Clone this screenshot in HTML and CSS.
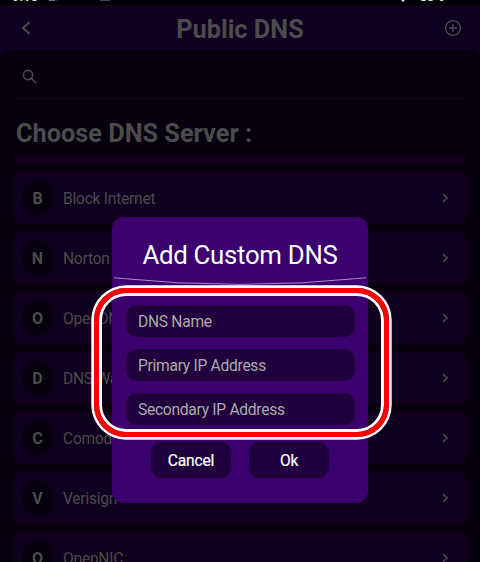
FILE: index.html
```
<!DOCTYPE html>
<html lang="en">
<head>
<meta charset="utf-8">
<title>Public DNS</title>
<link rel="stylesheet" href="styles.css">
</head>
<body>
<div class="screen">
  <div class="status"><span class="time">9:16</span>
    <svg class="st1" viewBox="0 0 12 3"><path d="M1 0V1.5H7M9 0V1.5" /></svg>
    <svg class="st2" viewBox="0 0 12 3"><path d="M1 .5H11" /></svg>
    <svg class="wifi" viewBox="0 0 6 3"><path d="M1 0L3 2L5 0Z" /></svg>
    <span class="battery">83%</span></div>
  <header class="topbar">
    <svg class="back" viewBox="0 0 10 14"><path d="M8.5 1.2L2 7L8.5 12.8"/></svg>
    <h1>Public DNS</h1>
    <svg class="plus" viewBox="0 0 18 18"><circle cx="9" cy="9" r="7.4"/><path d="M9 5V13M5 9H13"/></svg>
  </header>
  <main class="sheet">
    <div class="search"><svg viewBox="0 0 16 16"><circle cx="6" cy="6" r="4.6"/><path d="M9.4 9.4L14 14"/></svg></div>
    <h2>Choose DNS Server :</h2>
    <div class="list">
      <div class="row cut"></div>
      <div class="row"><b>B</b><span>Block Internet</span><svg viewBox="0 0 7 10"><path d="M1 1L5.2 5L1 9"/></svg></div>
      <div class="row"><b>N</b><span>Norton</span><svg viewBox="0 0 7 10"><path d="M1 1L5.2 5L1 9"/></svg></div>
      <div class="row"><b>O</b><span>OpenDNS</span><svg viewBox="0 0 7 10"><path d="M1 1L5.2 5L1 9"/></svg></div>
      <div class="row"><b>D</b><span>DNS Watch</span><svg viewBox="0 0 7 10"><path d="M1 1L5.2 5L1 9"/></svg></div>
      <div class="row"><b>C</b><span>Comodo</span><svg viewBox="0 0 7 10"><path d="M1 1L5.2 5L1 9"/></svg></div>
      <div class="row"><b>V</b><span>Verisign</span><svg viewBox="0 0 7 10"><path d="M1 1L5.2 5L1 9"/></svg></div>
      <div class="row"><b>O</b><span>OpenNIC</span><svg viewBox="0 0 7 10"><path d="M1 1L5.2 5L1 9"/></svg></div>
    </div>
  </main>
  <section class="dialog">
    <h3>Add Custom DNS</h3>
    <svg class="curve" viewBox="0 0 252 10"><path d="M0 .8Q126 14 252 .8"/></svg>
    <div class="fields">
      <div class="field">DNS Name</div>
      <div class="field">Primary IP Address</div>
      <div class="field">Secondary IP Address</div>
    </div>
    <div class="actions"><button>Cancel</button><button>Ok</button></div>
  </section>
  <div class="marker"></div>
</div>
</body>
</html>
```

FILE: styles.css
```
* { box-sizing: border-box; margin: 0; padding: 0; }
body { background: #000; font-family: Roboto, sans-serif; }
svg { display: block; fill: none; flex: none; }
.screen { position: relative; width: 480px; height: 562px; overflow: hidden; background: #10001f; }
.status { display: flex; height: 5px; padding: 0 36px 0 12px; background: #000; color: #eee; font-size: 13px; font-weight: 700; line-height: 14px; }
.status span { margin-top: -10px; }
.time { width: 36px; }
.status svg { height: 3px; margin-top: -1px; stroke: #777; stroke-width: 1; }
.st1 { width: 12px; }
.status .st2 { width: 12px; margin: 0 0 0 39px; stroke: #444; }
.status .wifi { width: 6px; margin: 0 14px 0 auto; fill: #ddd; stroke: none; }
.battery { font-weight: 500; }
.topbar { display: flex; align-items: center; height: 45px; padding: 2px 18px 0 21px; }
.topbar svg { stroke: #4b4b4b; }
.back { width: 10px; height: 14px; margin-top: -2px; stroke-width: 2; }
.topbar h1 { flex: 1; padding: 2px 0 0 5px; text-align: center; font-size: 25.3px; line-height: 30px; font-weight: 700; color: #4b4b4b; }
.plus { width: 18px; height: 18px; margin-top: -1px; stroke-width: 1.4; }
.sheet { height: 512px; border-radius: 12px 12px 0 0; background: #07000f; overflow: hidden; }
.search { height: 49px; margin: 0 16px; padding: 19px 0 0 6px; border-bottom: 1px solid #0b0b12; }
.search svg { width: 16px; height: 16px; stroke: #4b4b4b; stroke-width: 1.6; }
.sheet h2 { height: 57px; padding: 20px 16px 0; font-size: 25.3px; line-height: 30px; font-weight: 700; color: #4b4b4b; }
.list { display: flex; flex-direction: column; gap: 8px; height: 406px; padding: 0 12px; overflow: hidden; }
.row { display: flex; flex: none; align-items: center; height: 52px; padding: 0 19px 0 10px; border-radius: 11px; background: #10001f; color: #4b4b4b; font-size: 15.6px; letter-spacing: -.25px; }
.row.cut { height: 52px; margin-top: -44px; }
.row b { width: 31px; height: 36px; margin: 0 10px 0 0; border-radius: 50%; background: #07000f; text-align: center; line-height: 38px; font-size: 16px; letter-spacing: 0; }
.row span { flex: 1; padding-top: 2px; }
.row svg { width: 7px; height: 10px; stroke: #4b4b4b; stroke-width: 1.5; }
.dialog { position: absolute; left: 112px; top: 217px; width: 256px; height: 286px; border-radius: 12px; background: #3c006e; color: #fff; }
.dialog h3 { height: 60px; padding-top: 22px; text-align: center; font-size: 25.8px; letter-spacing: -.3px; line-height: 33px; font-weight: 400; }
.curve { width: 252px; height: 10px; margin: 0 2px; stroke: #a98bc4; stroke-width: 1; }
.fields { display: flex; flex-direction: column; gap: 12px; padding: 18px 13px 0 14px; }
.field { height: 32px; padding-left: 12px; border-radius: 11px; background: #20003c; color: #ababab; font-size: 15.6px; letter-spacing: -.28px; line-height: 34px; }
.actions { display: flex; justify-content: center; gap: 18px; margin-top: 17px; }
.actions button { width: 80px; height: 36px; border: 0; border-radius: 10px; background: #20003c; color: #fff; font: 400 15.6px/38px Roboto, sans-serif; letter-spacing: -.2px; -webkit-text-stroke: .2px #fff; }
.marker { position: absolute; left: 94px; top: 288px; width: 295px; height: 149px; border: 5px solid #f00; border-radius: 32px; box-shadow: 0 0 0 2.7px #fff, inset 0 0 0 3px #fff; }
```
